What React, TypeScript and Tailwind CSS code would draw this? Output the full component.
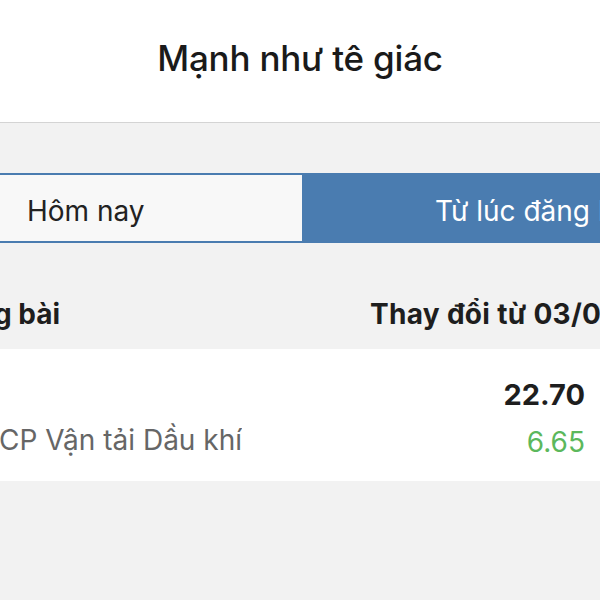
export default function App() {
  return (
    <div
      className="h-[600px] w-[600px] overflow-hidden bg-[#f2f2f2]"
      style={{ fontFamily: 'Inter, "Noto Sans", sans-serif' }}
    >
      {/* Nav bar */}
      <div className="flex h-[123px] items-center justify-center border-b border-[#d4d4d4] bg-white pb-[6px]">
        <h1 className="text-[35px] font-medium tracking-[-0.2px] text-[#1a1a1a]">Mạnh như tê giác</h1>
      </div>

      {/* Segmented control */}
      <div className="mt-[50px] flex h-[70px] w-[600px] border-y-2 border-[#4a7cb0]">
        <div className="flex w-[302px] items-center border-r-2 border-[#f8f8f8] bg-[#f8f8f8] pl-[27px] pt-[5px] text-[28px] text-[#222]">
          Hôm nay
        </div>
        <div className="flex flex-1 items-center overflow-hidden whitespace-nowrap bg-[#4a7cb0] pl-[133px] pt-[5px] text-[28px] text-white">
          Từ lúc đăng bài
        </div>
      </div>

      {/* Table header */}
      <div className="flex h-[106px] items-center pt-[36px] text-[28px] font-bold text-[#1e1e1e]">
        <div className="flex w-[60px] justify-end overflow-hidden whitespace-nowrap">Ngày đăng bài</div>
        <div className="ml-[310px] flex-1 overflow-hidden whitespace-nowrap tracking-[0.3px]">Thay đổi từ 03/04/2019</div>
      </div>

      {/* Row */}
      <div className="flex h-[132px] bg-white">
        <div className="flex w-[242px] items-end justify-end overflow-hidden whitespace-nowrap pb-[20px] text-[28px] text-[#666]">
          Tổng Công ty CP Vận tải Dầu khí
        </div>
        <div className="ml-auto mr-[-23px] flex flex-col items-end pt-[24px]">
          <div className="flex">
            <span className="text-[29px] font-bold text-[#1e1e1e]">22.70</span>
            <span className="ml-[13px] w-[25px]" />
          </div>
          <div className="mt-[4px] flex text-[28px] text-[#5cb85c]">
            <span>6.65</span>
            <span className="ml-[13px] w-[25px]">%</span>
          </div>
        </div>
      </div>
    </div>
  );
}
